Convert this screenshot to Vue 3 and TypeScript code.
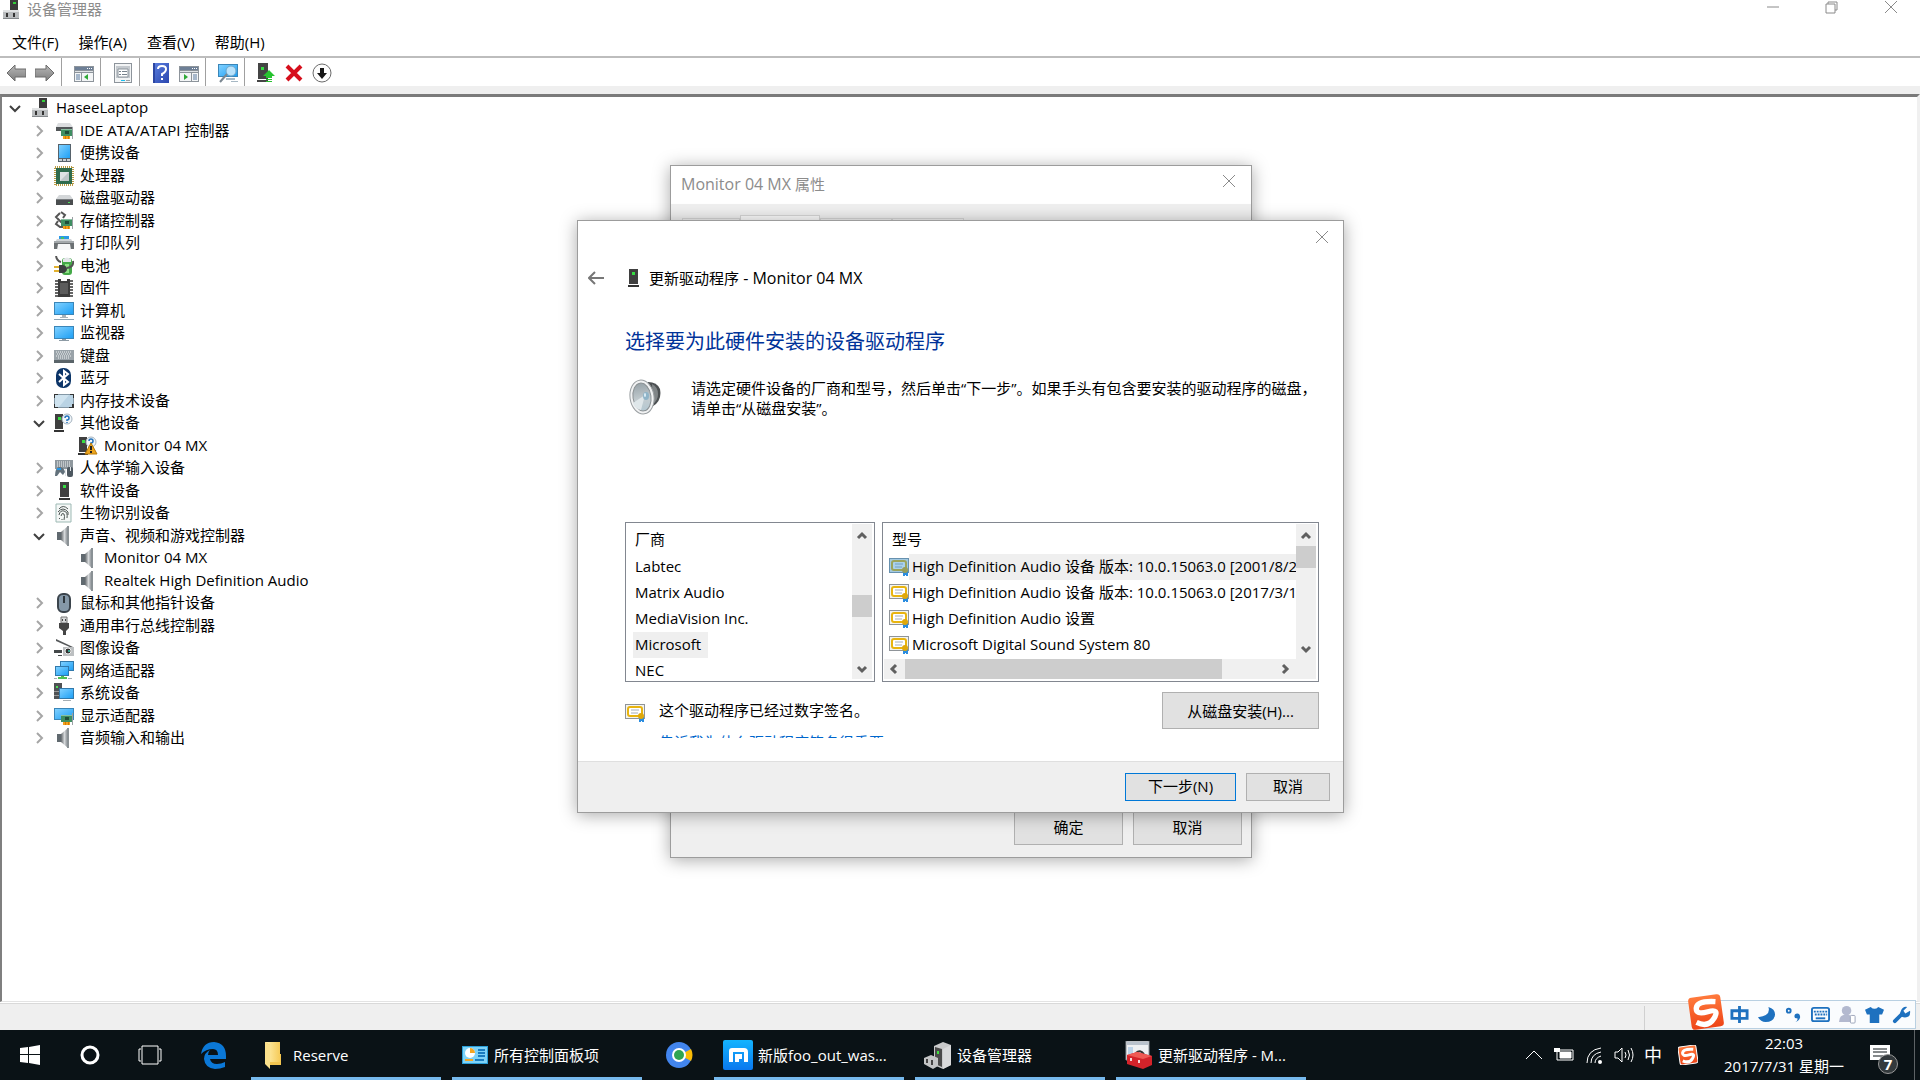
<script setup lang="ts">
import { h, type FunctionalComponent } from 'vue'

interface TreeRow { level: number; icon: string; label: string; state?: 'open' | 'closed' }

const rows: TreeRow[] = [
  { level: 0, icon: 'root', label: 'HaseeLaptop', state: 'open' },
  { level: 1, icon: 'ide', label: 'IDE ATA/ATAPI 控制器', state: 'closed' },
  { level: 1, icon: 'portable', label: '便携设备', state: 'closed' },
  { level: 1, icon: 'cpu', label: '处理器', state: 'closed' },
  { level: 1, icon: 'disk', label: '磁盘驱动器', state: 'closed' },
  { level: 1, icon: 'storage', label: '存储控制器', state: 'closed' },
  { level: 1, icon: 'printer', label: '打印队列', state: 'closed' },
  { level: 1, icon: 'battery', label: '电池', state: 'closed' },
  { level: 1, icon: 'firmware', label: '固件', state: 'closed' },
  { level: 1, icon: 'computer', label: '计算机', state: 'closed' },
  { level: 1, icon: 'monitor', label: '监视器', state: 'closed' },
  { level: 1, icon: 'keyboard', label: '键盘', state: 'closed' },
  { level: 1, icon: 'bluetooth', label: '蓝牙', state: 'closed' },
  { level: 1, icon: 'memory', label: '内存技术设备', state: 'closed' },
  { level: 1, icon: 'other', label: '其他设备', state: 'open' },
  { level: 2, icon: 'warn', label: 'Monitor 04 MX' },
  { level: 1, icon: 'hid', label: '人体学输入设备', state: 'closed' },
  { level: 1, icon: 'tower', label: '软件设备', state: 'closed' },
  { level: 1, icon: 'finger', label: '生物识别设备', state: 'closed' },
  { level: 1, icon: 'sound', label: '声音、视频和游戏控制器', state: 'open' },
  { level: 2, icon: 'sound', label: 'Monitor 04 MX' },
  { level: 2, icon: 'sound', label: 'Realtek High Definition Audio' },
  { level: 1, icon: 'mouse', label: '鼠标和其他指针设备', state: 'closed' },
  { level: 1, icon: 'usb', label: '通用串行总线控制器', state: 'closed' },
  { level: 1, icon: 'camera', label: '图像设备', state: 'closed' },
  { level: 1, icon: 'network', label: '网络适配器', state: 'closed' },
  { level: 1, icon: 'system', label: '系统设备', state: 'closed' },
  { level: 1, icon: 'display', label: '显示适配器', state: 'closed' },
  { level: 1, icon: 'sound', label: '音频输入和输出', state: 'closed' },
]

const menus = ['文件(F)', '操作(A)', '查看(V)', '帮助(H)']
const tools: { name: string; label: string }[][] = [
  [{ name: 'prev', label: '后退' }, { name: 'next', label: '前进' }],
  [{ name: 'panel-left', label: '显示/隐藏控制台树' }],
  [{ name: 'props', label: '属性' }],
  [{ name: 'help', label: '帮助' }, { name: 'panel-right', label: '显示/隐藏操作窗格' }],
  [{ name: 'scan', label: '扫描检测硬件改动' }],
  [{ name: 'update', label: '更新驱动程序' }, { name: 'remove', label: '卸载设备' }, { name: 'disable', label: '禁用设备' }],
]
const makers = ['Labtec', 'Matrix Audio', 'MediaVision Inc.', 'Microsoft', 'NEC']
const models = [
  'High Definition Audio 设备 版本: 10.0.15063.0 [2001/8/22]',
  'High Definition Audio 设备 版本: 10.0.15063.0 [2017/3/18]',
  'High Definition Audio 设置',
  'Microsoft Digital Sound System 80',
]
const imeTools = ['zhong', 'moon', 'punct', 'softkeys', 'person', 'shirt', 'wrench']

const Icon: FunctionalComponent<{ name: string }> = (p) =>
  h('svg', { class: 'ico', viewBox: '0 0 20 20', 'aria-hidden': 'true' }, [h('use', { href: '#i-' + p.name })])
Icon.props = ['name']
</script>

<template>
  <div class="screen">
    <svg class="defs" width="0" height="0" aria-hidden="true">
      <defs>
        <linearGradient id="g-blue" x1="0" y1="0" x2="1" y2="1"><stop offset="0" stop-color="#7fd0ff" /><stop offset="1" stop-color="#1fa0f5" /></linearGradient>
        <linearGradient id="g-grey" x1="0" y1="0" x2="1" y2="0"><stop offset="0" stop-color="#62676b" /><stop offset="0.5" stop-color="#d5d8da" /><stop offset="1" stop-color="#7b8186" /></linearGradient>
        <linearGradient id="g-arrow" x1="0" y1="0" x2="0" y2="1"><stop offset="0" stop-color="#b8b8b8" /><stop offset="1" stop-color="#7d7d7d" /></linearGradient>
        <linearGradient id="g-help" x1="0" y1="0" x2="1" y2="1"><stop offset="0" stop-color="#5b7fe0" /><stop offset="1" stop-color="#2a46ae" /></linearGradient>
        <linearGradient id="g-fold" x1="0" y1="0" x2="1" y2="0"><stop offset="0" stop-color="#fff0b0" /><stop offset="1" stop-color="#f6cb59" /></linearGradient>
        <linearGradient id="g-max" x1="0" y1="0" x2="0" y2="1"><stop offset="0" stop-color="#14b4ff" /><stop offset="1" stop-color="#0a78ee" /></linearGradient>
        <linearGradient id="g-cone" x1="0" y1="0" x2="0" y2="1"><stop offset="0" stop-color="#98a3a9" /><stop offset="0.600" stop-color="#c3ccd0" /><stop offset="1" stop-color="#b4c8d2" /></linearGradient>
        <linearGradient id="g-sogou" x1="0" y1="0" x2="0" y2="1"><stop offset="0" stop-color="#ff7a3c" /><stop offset="1" stop-color="#ee4518" /></linearGradient>
      </defs>
      <symbol id="i-root" viewBox="0 0 20 20"><path d="M9 0h8v11H9z" fill="#3b3b3b" /><path d="M12 2h3v2h-3z" fill="#33cf3a" /><path d="M2 10h16v9H2z" fill="#b9bcbe" /><path d="M2 10h16v2H2z" fill="#e0e2e3" /><path d="M2 18h16v1H2z" fill="#84888b" /><path d="M5 13h2v4H5zM12 13h2v4h-2z" fill="#333" /></symbol>
      <symbol id="i-card" viewBox="0 0 20 20"><path d="M7 8h11v7H7z" fill="#3f8f62" /><path d="M7 8h11v1H7z" fill="#88bfa0" /><path d="M11 10h4v3h-4z" fill="#1f4d38" /><path d="M18 6h1v12h-1z" fill="#9aa0a4" /><path d="M9 15h7v3H9z" fill="#f4a11c" /><path d="M11 15h1v3h-1zM14 15h1v3h-1z" fill="#d67b00" /></symbol>
      <symbol id="i-ide" viewBox="0 0 20 20"><path d="M4 2h12l3 4H2z" fill="#dcdee0" /><path d="M2 6h17v4H2z" fill="#525658" /><use href="#i-card" /></symbol>
      <symbol id="i-portable" viewBox="0 0 20 20"><path d="M4 1h13v18H4z" fill="#56626b" /><path d="M5 2h11v13H5z" fill="url(#g-blue)" /><path d="M5 16h11v2H5z" fill="#c8cfd3" /><path d="M8 16h1v2H8zM12 16h1v2h-1z" fill="#56626b" /></symbol>
      <symbol id="i-cpu" viewBox="0 0 20 20"><rect x="1" y="1" width="18" height="18" fill="none" stroke="#b99b44" stroke-width="2" stroke-dasharray="1 1" /><path d="M2 2h16v16H2z" fill="#2f6b4d" /><path d="M6 6h9v9H6z" fill="#dfe2e3" /><path d="M15 6v9H6z" fill="#bfc6c8" /></symbol>
      <symbol id="i-disk" viewBox="0 0 20 20"><path d="M5 7h11l3 4H2z" fill="#d4d7d9" /><path d="M2 11h17v6H2z" fill="#4a4d4f" /><path d="M2 11h17v1H2z" fill="#777b7e" /><path d="M14 14h2v1h-2z" fill="#4fe05a" /></symbol>
      <symbol id="i-storage" viewBox="0 0 20 20"><path d="M7 1l4 3-2 3M6 2L2 6l5 5h5M4 10l-2 3 4 3h4" fill="none" stroke="#555" stroke-width="2" /><use href="#i-card" /></symbol>
      <symbol id="i-printer" viewBox="0 0 20 20"><path d="M5 3h10v5H5z" fill="#2b9ae8" /><path d="M7 4h3v3H7z" fill="#42c36a" /><path d="M3 6h14l2 3H1z" fill="#cfd3d6" /><path d="M0 8h20v8H0z" fill="#6b7073" /><path d="M0 8h20v2H0z" fill="#a3a8ab" /><path d="M4 11h12l1 6H3z" fill="#f6f7f8" /></symbol>
      <symbol id="i-battery" viewBox="0 0 20 20"><rect x="8" y="2" width="10" height="17" rx="3" fill="#44a948" /><path d="M9 3q4-3 8 0v3H9z" fill="#e4e6ea" /><path d="M11 8h4v9h-4z" fill="#8ce084" /><path d="M0 10h5v2H0zM0 14h5v2H0z" fill="#e2b12f" /><path d="M5 9h4q4 1 4 4t-4 4H5z" fill="#3c3f40" /><path d="M13 12q7-1 6-7M2 0q1 5 5 6" fill="none" stroke="#555" stroke-width="2" /></symbol>
      <symbol id="i-firmware" viewBox="0 0 20 20"><path d="M3 2v17M17 2v17" stroke="#666" stroke-width="4" stroke-dasharray="2 1" /><path d="M4 1h3v2h6V1h3v18H4z" fill="#3c3c3c" /><path d="M6 5h8v11H6z" fill="#5c5c5c" /></symbol>
      <symbol id="i-computer" viewBox="0 0 20 20"><path d="M0 1h20v13H0z" fill="#3b86b8" /><path d="M1 2h18v11H1z" fill="url(#g-blue)" /><path d="M8 14h4v2h2v1H6v-1h2z" fill="#a9b3ba" /><path d="M0 18h20v1H0z" fill="#8fa5b4" /></symbol>
      <symbol id="i-monitor" viewBox="0 0 20 20"><path d="M0 3h20v13H0z" fill="#3b86b8" /><path d="M1 4h18v11H1z" fill="url(#g-blue)" /><path d="M8 16h4v1h3v1H5v-1h3z" fill="#8d9ba5" /></symbol>
      <symbol id="i-keyboard" viewBox="0 0 20 20"><path d="M0 4h20v10H0z" fill="#9aa3a9" /><path d="M0 14h20v3H0z" fill="#5a6469" /><path d="M2 6h16M3 8h14M2 10h16M4 12h12" stroke="#f1f4f5" stroke-dasharray="1 1" /></symbol>
      <symbol id="i-bluetooth" viewBox="0 0 20 20"><rect x="2" y="0" width="15" height="20" rx="7" fill="#0c3568" /><path d="M5 6l9 8-4 3V3l4 3-9 8" fill="none" stroke="#fff" stroke-width="2" /></symbol>
      <symbol id="i-memory" viewBox="0 0 20 20"><rect x="0" y="3" width="20" height="14" rx="1" fill="#8397a5" /><path d="M1 4h18v12H1z" fill="#b9d3e4" /><path d="M1 4h14L5 16H1z" fill="#cfe3ef" /><path d="M0 3h4v1H1v3H0zM20 3h-4v1h3v3h1zM0 17h4v-1H1v-3H0zM20 17h-5v-1h3v-3h2z" fill="#333" /></symbol>
      <symbol id="i-pc" viewBox="0 0 20 20"><path d="M1 1h8v15H1z" fill="#3f3f3f" /><path d="M4 4h3v3H4z" fill="#36dd42" /><path d="M0 17h10v2H0z" fill="#333" /></symbol>
      <symbol id="i-other" viewBox="0 0 20 20"><use href="#i-pc" /><circle cx="13" cy="6" r="5" fill="#f1f6fa" stroke="#a6b4bf" /><path d="M11 5q0-2 2-2t2 2-2 2v1M13 9v1" fill="none" stroke="#2472bb" stroke-width="1.500" /></symbol>
      <symbol id="i-warn" viewBox="0 0 20 20"><use href="#i-other" /><path d="M13 7l6 11H7z" fill="#eea51d" stroke="#b97a08" /><path d="M13 10v4M13 15v2" stroke="#222" stroke-width="2" /></symbol>
      <symbol id="i-hid" viewBox="0 0 20 20"><path d="M1 2h18v9H1z" fill="#8f989e" /><path d="M3 4h14M3 6h14M3 8h14" stroke="#f1f4f5" stroke-dasharray="1 1" /><path d="M1 18q0-8 4-9 5 0 6 5l-2 3-3-3-3 4z" fill="#62717b" /><path d="M3 10h4v2H3z" fill="#2794e2" /><rect x="13" y="9" width="6" height="10" rx="2" fill="#4d5860" /><path d="M11 11h1v7h-1zM16 9h1v4h-1z" fill="#dfe4e8" /></symbol>
      <symbol id="i-tower" viewBox="0 0 20 20"><path d="M6 1h9v15H6z" fill="#3f3f3f" /><path d="M9 4h3v3H9z" fill="#36dd42" /><path d="M5 17h11v2H5z" fill="#333" /></symbol>
      <symbol id="i-finger" viewBox="0 0 20 20"><path d="M2 1h15v18H2z" fill="#f4f7f6" stroke="#9db9b4" /><path d="M5 6q4-5 9 0M4 9q5-6 10 0v3M5 12q1-5 5-4 4 1 3 7M7 13q1-4 3-2 1 2 0 6M8 16v1M5 15l1 1" fill="none" stroke="#4c5452" /></symbol>
      <symbol id="i-sound" viewBox="0 0 20 20"><path d="M3 6h4v8H3z" fill="#60696f" /><path d="M7 6l7-6v20l-7-6z" fill="url(#g-grey)" /><path d="M13 0h2v20h-2z" fill="#8a9195" /></symbol>
      <symbol id="i-mouse" viewBox="0 0 20 20"><rect x="4" y="1" width="12" height="18" rx="5" fill="#8598a8" stroke="#3b444c" stroke-width="2" /><path d="M9 3h2v7H9z" fill="#2e363c" /></symbol>
      <symbol id="i-usb" viewBox="0 0 20 20"><path d="M7 1h6v6H7z" fill="#d8dadb" stroke="#777" /><path d="M8 3h1v2H8zM11 3h1v2h-1z" fill="#444" /><path d="M5 7h10v5l-3 3v4H9v-4l-4-3z" fill="#454545" /></symbol>
      <symbol id="i-camera" viewBox="0 0 20 20"><path d="M2 1l17 8-1 1L2 3z" fill="#55585a" /><path d="M9 9h11v9H9z" fill="#bcbfc1" /><path d="M0 12h8v3H0zM8 17h-4v1h4z" fill="#44484a" /><circle cx="14" cy="13" r="3" fill="#333" stroke="#eee" /><circle cx="15" cy="13" r="1" fill="#3dc9b0" /></symbol>
      <symbol id="i-network" viewBox="0 0 20 20"><path d="M6 0h14v10H6z" fill="#3179ab" /><path d="M7 1h12v8H7z" fill="url(#g-blue)" /><path d="M1 5h14v10H1z" fill="#3179ab" /><path d="M2 6h12v8H2z" fill="url(#g-blue)" /><path d="M7 15h3v1h3v2H4v-2h3z" fill="#4fbf55" /><path d="M0 17h3v1H0zM14 17h4v1h-4z" fill="#a5aeb4" /></symbol>
      <symbol id="i-system" viewBox="0 0 20 20"><path d="M0 0h8v16H0z" fill="#4f5254" /><path d="M2 3h2v2H2z" fill="#4fe05a" /><path d="M0 8h5v1H0zM0 12h5v1H0z" fill="#999" /><path d="M5 5h15v11H5z" fill="#3179ab" /><path d="M6 6h13v9H6z" fill="url(#g-blue)" /><path d="M9 17h8v1H9z" fill="#a5aeb4" /></symbol>
      <symbol id="i-display" viewBox="0 0 20 20"><path d="M0 2h20v12H0z" fill="#3b86b8" /><path d="M1 3h18v10H1z" fill="url(#g-blue)" /><use href="#i-card" y="1" /></symbol>

      <symbol id="i-prev" viewBox="0 0 20 20"><path d="M9 2L1 10l8 8v-4h11V6H9z" fill="url(#g-arrow)" stroke="#6c6c6c" /></symbol>
      <symbol id="i-next" viewBox="0 0 20 20"><path d="M11 2l8 8-8 8v-4H0V6h11z" fill="url(#g-arrow)" stroke="#6c6c6c" /></symbol>
      <symbol id="i-panel" viewBox="0 0 20 20"><path d="M0 3h20v16H0z" fill="#8d949b" /><path d="M1 4h18v3H1z" fill="#6d7f96" /><path d="M13 5h1v1h-1zM15 5h1v1h-1zM17 5h1v1h-1z" fill="#fff" /><path d="M1 8h18v1H1z" fill="#dfe3e6" /></symbol>
      <symbol id="i-panel-left" viewBox="0 0 20 20"><use href="#i-panel" /><path d="M1 10h6v8H1zM8 10h11v8H8z" fill="#f3f5f6" /><path d="M2 12h4M2 14h4M2 16h4" stroke="#5b7ba0" /><path d="M14 11v6l-4-3z" fill="#2fa836" /></symbol>
      <symbol id="i-panel-right" viewBox="0 0 20 20"><use href="#i-panel" /><path d="M1 10h11v8H1zM13 10h6v8h-6z" fill="#f3f5f6" /><path d="M14 12h4M14 14h4M14 16h4" stroke="#5b7ba0" /><path d="M5 11v6l4-3z" fill="#2fa836" /></symbol>
      <symbol id="i-props" viewBox="0 0 20 20"><path d="M1 0h18v20H1z" fill="#8d949b" /><path d="M2 1h16v18H2z" fill="#f2f4f5" /><path d="M3 3h14v12H3z" fill="#c4c9ce" /><path d="M5 6h10v8H5z" fill="#fff" stroke="#8c959d" /><path d="M6 8h2v1H6zM6 11h2v1H6zM9 8h5v1H9zM9 11h5v1H9z" fill="#77828c" /><path d="M8 17h4v1H8z" fill="#18bff0" /><path d="M13 17h4v1h-4z" fill="#9ba1a6" /></symbol>
      <symbol id="i-help" viewBox="0 0 20 20"><path d="M2 0h16v20H2z" fill="url(#g-help)" /><path d="M2 0h2v20H2z" fill="#2c46a2" /><path d="M7 6q0-3 4-3t4 3-4 5v2M11 15v2" fill="none" stroke="#fff" stroke-width="2" /></symbol>
      <symbol id="i-scan" viewBox="0 0 20 20"><path d="M0 1h20v13H0z" fill="#3b86b8" /><path d="M1 2h18v11H1z" fill="url(#g-blue)" /><path d="M8 15h9v2H8zM13 18h7v1h-7z" fill="#a7b8c4" /><circle cx="13" cy="8" r="5" fill="#b9e2fb" stroke="#6ea6c9" /><path d="M9 11l-7 8" stroke="#7b8791" stroke-width="2" /></symbol>
      <symbol id="i-update" viewBox="0 0 20 20"><path d="M2 0h10v16H2z" fill="#444" /><path d="M5 4h3v3H5z" fill="#36dd42" /><path d="M1 17h11v2H1z" fill="#444" /><path d="M13 7l6 6h-3v2h-6v-2H7zM10 16h6v1h-6zM10 18h6v1h-6z" fill="#27c32f" /></symbol>
      <symbol id="i-remove" viewBox="0 0 20 20"><path d="M3 3l14 14M17 3L3 17" stroke="#d60f1c" stroke-width="4" /></symbol>
      <symbol id="i-disable" viewBox="0 0 20 20"><circle cx="10" cy="10" r="9" fill="#fdfdfd" stroke="#6b6b6b" /><path d="M8 5h4v5h3l-5 6-5-6h3z" fill="#151515" /></symbol>
      <symbol id="i-cert" viewBox="0 0 20 20"><path d="M0 1h20v15H0z" fill="#8f9499" /><path d="M1 2h18v13H1z" fill="#f3f3ee" /><rect x="3" y="4" width="14" height="9" rx="2" fill="#fff" stroke="#e8b410" stroke-width="2" /><path d="M6 7h8M6 10h7" stroke="#a4aeb9" /><path d="M14 14h5v5h-2v-1h-1v1h-2z" fill="#2a8ce0" /><circle cx="16" cy="13" r="3" fill="#e0a80a" /></symbol>
      <symbol id="i-cert-sel" viewBox="0 0 20 20"><use href="#i-cert" /><path d="M0 1h20v15H0z" fill="#2a8cd0" opacity="0.400" /></symbol>

      <symbol id="i-zhong" viewBox="0 0 20 20"><path d="M2 6h16v8H2zM10 1v18" fill="none" stroke="#1e71bf" stroke-width="3" /></symbol>
      <symbol id="i-moon" viewBox="0 0 20 20"><path d="M12 2q3 9-11 11 3 5 8 5 9 0 10-8 0-6-7-8z" fill="#1e71bf" /></symbol>
      <symbol id="i-punct" viewBox="0 0 20 20"><circle cx="5" cy="6" r="2" fill="none" stroke="#1e71bf" stroke-width="2" /><path d="M11 12q0-3 3-3t3 4q-1 4-5 5 3-2 2-4-3 0-3-2z" fill="#1e71bf" /></symbol>
      <symbol id="i-softkeys" viewBox="0 0 20 20"><rect x="1" y="3" width="18" height="14" rx="2" fill="none" stroke="#1e71bf" stroke-width="2" /><path d="M3 7h14M4 10h13" stroke="#1e71bf" stroke-width="2" stroke-dasharray="2 1" /><path d="M5 14h10" stroke="#1e71bf" stroke-width="2" /></symbol>
      <symbol id="i-person" viewBox="0 0 20 20"><circle cx="9" cy="6" r="5" fill="#b3b9cf" /><path d="M1 18q0-8 8-8 7 0 7 8z" fill="#b3b9cf" /><rect x="13" y="11" width="5" height="8" rx="1" fill="#fff" stroke="#9ba3b8" /></symbol>
      <symbol id="i-shirt" viewBox="0 0 20 20"><path d="M6 2q4 4 8 0l6 3-2 5h-3v9H5v-9H2L0 5z" fill="#1e71bf" /></symbol>
      <symbol id="i-wrench" viewBox="0 0 20 20"><path d="M3 17l8-8" stroke="#1e71bf" stroke-width="4" stroke-linecap="round" /><path d="M16 2l-4 4 2 3 5-3q1 8-7 7-5-1-3-6 2-6 7-5z" fill="#1e71bf" /></symbol>
      <symbol id="i-sogou" viewBox="0 0 20 20"><g transform="rotate(-8 10 10)"><rect x="1" y="1" width="18" height="18" rx="2" fill="url(#g-sogou)" /><path d="M16 5Q6 3 5 7t6 3 3 4-10 1" fill="none" stroke="#fff" stroke-width="3" /></g></symbol>
    </svg>

    <header class="titlebar">
      <Icon name="root" />
      <h1 class="title">设备管理器</h1>
      <div class="winbtns">
        <button type="button" aria-label="最小化"><svg viewBox="0 0 14 14"><path d="M1 7h12" /></svg></button>
        <button type="button" aria-label="还原"><svg viewBox="0 0 14 14"><path d="M1 4h9v9H1zM3 4V2h9v8h-2" /></svg></button>
        <button type="button" aria-label="关闭"><svg viewBox="0 0 14 14"><path d="M1 1l12 12M13 1L1 13" /></svg></button>
      </div>
    </header>
    <nav class="menubar">
      <button v-for="m in menus" :key="m" type="button">{{ m }}</button>
    </nav>
    <div class="toolbar">
      <div v-for="(group, i) in tools" :key="i" class="group">
        <button v-for="t in group" :key="t.name" type="button" :aria-label="t.label"><Icon :name="t.name" /></button>
      </div>
    </div>

    <main class="pane">
      <ul class="tree">
        <li v-for="(r, i) in rows" :key="i" :class="'lv' + r.level">
          <span class="chev">
            <svg v-if="r.state === 'open'" viewBox="0 0 12 12"><path d="M1 4l5 5 5-5" stroke="#404040" /></svg>
            <svg v-else-if="r.state === 'closed'" viewBox="0 0 12 12"><path d="M4 1l5 5-5 5" stroke="#a6a6a6" /></svg>
          </span>
          <Icon :name="r.icon" />
          <span class="label">{{ r.label }}</span>
        </li>
      </ul>
    </main>
    <div class="statusbar"><i></i></div>

    <section class="dialog props" aria-label="Monitor 04 MX 属性">
      <header class="dlg-title"><h2><span class="wide-latin">Monitor 04 MX</span> 属性</h2>
        <button type="button" class="x" aria-label="关闭"><svg viewBox="0 0 14 14"><path d="M1 1l12 12M13 1L1 13" /></svg></button>
      </header>
      <div class="tabs"><span></span><span class="on"></span><span></span><span></span></div>
      <footer><button type="button" class="btn">确定</button><button type="button" class="btn">取消</button></footer>
    </section>

    <section class="dialog wizard" aria-label="更新驱动程序">
      <header class="wiz-top">
        <button type="button" class="x" aria-label="关闭"><svg viewBox="0 0 14 14"><path d="M1 1l12 12M13 1L1 13" /></svg></button>
      </header>
      <div class="wiz-head">
        <button type="button" class="back" aria-label="后退"><svg viewBox="0 0 16 14"><path d="M1 7h15M7 1L1 7l6 6" /></svg></button>
        <Icon name="tower" />
        <h2>更新驱动程序<span class="wide-latin"> - Monitor 04 MX</span></h2>
      </div>
      <div class="wiz-body">
        <h3>选择要为此硬件安装的设备驱动程序</h3>
        <div class="intro">
          <svg class="speaker" viewBox="0 0 34 38" aria-hidden="true">
            <path d="M20 4q9 0 12 7 2 9-4 15-4 4-9 3z" fill="#4c5052" />
            <path d="M24 6q6 3 6 10 0 6-5 10z" fill="#808587" />
            <ellipse cx="14" cy="19" rx="12" ry="17" fill="#f1f2f3" stroke="#9a9fa2" transform="rotate(-8 14 19)" />
            <ellipse cx="14" cy="19" rx="9" ry="14" fill="url(#g-cone)" stroke="#8b9194" transform="rotate(-8 14 19)" />
            <path d="M17 17L5 25q2 6 8 7z" fill="#dfe7ea" />
            <ellipse cx="18" cy="18" rx="3" ry="4" fill="#8fb4c8" />
            <ellipse cx="17" cy="17" rx="1" ry="2" fill="#dff0f8" />
          </svg>
          <p>请选定硬件设备的厂商和型号，然后单击<q>下一步</q>。如果手头有包含要安装的驱动程序的磁盘，<br>请单击<q>从磁盘安装</q>。</p>
        </div>
        <div class="lists">
          <div class="box makers">
            <div class="view">
              <div class="colhead">厂商</div>
              <ul role="listbox" aria-label="厂商">
                <li v-for="m in makers" :key="m" role="option" :aria-selected="m === 'Microsoft'"><span class="label">{{ m }}</span></li>
              </ul>
            </div>
            <div class="vbar"><svg viewBox="0 0 12 12"><path d="M2 8l4-4 4 4" /></svg><b></b><svg viewBox="0 0 12 12"><path d="M2 4l4 4 4-4" /></svg></div>
          </div>
          <div class="box models">
            <div class="upper">
              <div class="view">
                <div class="colhead">型号</div>
                <ul role="listbox" aria-label="型号">
                  <li v-for="(m, i) in models" :key="m" role="option" :aria-selected="i === 0"><Icon :name="i === 0 ? 'cert-sel' : 'cert'" /><span class="label">{{ m }}</span></li>
                </ul>
              </div>
              <div class="vbar"><svg viewBox="0 0 12 12"><path d="M2 8l4-4 4 4" /></svg><b></b><svg viewBox="0 0 12 12"><path d="M2 4l4 4 4-4" /></svg></div>
            </div>
            <div class="hbar"><svg viewBox="0 0 12 12"><path d="M8 2L4 6l4 4" /></svg><b></b><svg viewBox="0 0 12 12"><path d="M4 2l4 4-4 4" /></svg></div>
          </div>
        </div>
        <div class="signed">
          <Icon name="cert" />
          <div class="signtext">
            <p>这个驱动程序已经过数字签名。</p>
            <a href="#">告诉我为什么驱动程序签名很重要</a>
          </div>
          <button type="button" class="btn">从磁盘安装(H)...</button>
        </div>
      </div>
      <footer><button type="button" class="btn primary">下一步(N)</button><button type="button" class="btn">取消</button></footer>
    </section>

    <div class="ime">
      <Icon name="sogou" class="imelogo" />
      <button v-for="t in imeTools" :key="t" type="button" :aria-label="t"><Icon :name="t" /></button>
    </div>

    <footer class="taskbar">
      <button type="button" class="sys" aria-label="开始"><svg viewBox="0 0 20 20"><path d="M0 3l8-1v7H0zM9 2l11-2v9H9zM0 10h8v8l-8-1zM9 10h11v10L9 18z" fill="#fff" /></svg></button>
      <button type="button" class="sys" aria-label="Cortana"><svg viewBox="0 0 20 20"><circle cx="10" cy="10" r="8" fill="none" stroke="#fff" stroke-width="3" /></svg></button>
      <button type="button" class="sys" aria-label="任务视图"><svg class="w24" viewBox="0 0 24 20"><path d="M4 1h16v18H4zM3 4H1v12h2M21 4h2v12h-2" fill="none" stroke="#fff" /></svg></button>
      <button type="button" class="sys edge" aria-label="Edge"><svg class="w28" viewBox="0 0 28 28"><path d="M1 13Q3 1 14 1q12 1 12 14v3H10q1 5 7 5 4 0 8-2v5q-5 2-10 2Q5 27 4 18q0-6 6-9-2 2-2 5h10q0-6-5-6-7 0-12 5z" fill="#0b78d7" /></svg></button>
      <button type="button" class="task">
        <svg class="w28" viewBox="0 0 28 28"><path d="M5 1h15v12h1v11H10z" fill="#f2c550" /><path d="M5 1h15v20H10V4z" fill="url(#g-fold)" /><path d="M5 1l5 3v24l-5-5z" fill="#fbe08b" /></svg>
        <span>Reserve</span></button>
      <button type="button" class="task">
        <svg class="w28" viewBox="0 0 28 28"><path d="M1 5h26v18H1z" fill="#2a9fd8" /><path d="M2 6h24v16H2z" fill="#7ed2f7" /><circle cx="9" cy="12" r="5" fill="#fff" /><path d="M9 12V7a5 5 0 0 1 5 5z" fill="#f5a623" /><path d="M17 9h7M17 12h7M17 15h7" stroke="#1b7cc0" stroke-width="2" /><path d="M4 19h8" stroke="#f5a623" stroke-width="2" /><path d="M14 19h9" stroke="#1b7cc0" stroke-width="2" /></svg>
        <span>所有控制面板项</span></button>
      <button type="button" class="sys chrome" aria-label="浏览器"><svg class="w28" viewBox="0 0 28 28"><circle cx="14" cy="14" r="13" fill="#4285ee" /><path d="M15 14l11-6q3 6 0 12z" fill="#fbbc05" /><circle cx="14" cy="14" r="7" fill="#fff" /><circle cx="14" cy="14" r="5" fill="#2fa552" /></svg></button>
      <button type="button" class="task">
        <svg class="w30" viewBox="0 0 30 30"><rect width="30" height="30" rx="2" fill="url(#g-max)" /><path d="M8 22V11q0-1 1-1h12q2 0 2 2v10M14 22v-6h3v3" fill="none" stroke="#fff" stroke-width="4" /></svg>
        <span>新版foo_out_was...</span></button>
      <button type="button" class="task">
        <svg class="w28" viewBox="0 0 28 28"><path d="M10 5l9-4 8 3v20l-8 4-9-4z" fill="#c9cacb" /><path d="M11 6l7 2v18l-7-3z" fill="#4a4a4a" /><path d="M19 8l8-4v20l-8 4z" fill="#d9dadb" /><path d="M13 10h2v3h-2z" fill="#3fe03f" /><path d="M0 17l7-3 7 3v8l-5 3-9-5z" fill="#c3c5c6" /><path d="M3 18v4M8 19v5" stroke="#444" stroke-width="2" /></svg>
        <span>设备管理器</span></button>
      <button type="button" class="task">
        <svg class="w28" viewBox="0 0 28 28"><path d="M1 0h23v19H1z" fill="#eef0f2" stroke="#8b9299" /><path d="M2 1h21v3H2z" fill="#b9c2cc" /><path d="M3 6h5v7H3z" fill="#bcd3e8" /><path d="M11 12q4-4 8 1" fill="none" stroke="#333" stroke-width="2" /><path d="M2 14l10-3 15 4v9l-9 4-16-5z" fill="#d4232a" /><path d="M2 14l10-3 15 4-9 3z" fill="#ef5a54" /><path d="M6 17v3M14 19v3" stroke="#f6d9d9" stroke-width="2" /></svg>
        <span>更新驱动程序 - M...</span></button>

      <div class="tray">
        <svg viewBox="0 0 20 20"><path d="M2 14l8-8 8 8" /></svg>
        <svg viewBox="0 0 20 20"><path d="M3 5h16v10H3z" /><path d="M6 7h11v6H6z" fill="#fff" /><path d="M0 3h6v4H0z" fill="#fff" stroke="none" /></svg>
        <svg viewBox="0 0 20 20"><path d="M3 18Q3 5 17 3M7 18q0-9 10-11M11 18q0-5 6-7" /><circle cx="16" cy="17" r="2" fill="#fff" stroke="none" /></svg>
        <svg viewBox="0 0 20 20"><path d="M1 7h3l4-4v14l-4-4H1z" /><path d="M11 7q2 3 0 6M14 5q3 5 0 10M17 3q4 7 0 14" /></svg>
        <span class="zh">中</span>
        <Icon name="sogou" />
      </div>
      <div class="clock"><time>22:03</time><span>2017/7/31 星期一</span></div>
      <button type="button" class="notify" aria-label="通知">
        <svg viewBox="0 0 20 20"><path d="M0 0h20v15h-6l-4 4v-4H0z" fill="#fff" /><path d="M3 4h14M3 7h14M3 11h10" stroke="#0a1317" /></svg>
        <span class="count">7</span></button>
      <i class="peek"></i>
    </footer>
  </div>
</template>

<style>
body { margin: 0; background: #fff; }
</style>

<style scoped>
* { box-sizing: border-box; }
.screen { position: relative; display: flex; flex-direction: column; min-height: 100vh; overflow: hidden; background: #fff; color: #000; font: 15px/20px "Open Sans", "Noto Sans CJK SC", sans-serif; }
.defs { position: absolute; }
button { margin: 0; padding: 0; border: 0; background: none; font: inherit; color: inherit; }
h1, h2, h3, p, ul { margin: 0; padding: 0; font-weight: 400; font-size: 15px; }
ul { list-style: none; }
svg { display: block; flex: none; }
.ico { width: 20px; height: 20px; }
.label { padding-bottom: 2px; white-space: pre; }
.wide-latin { font-size: 16px; white-space: pre; }

.titlebar { display: flex; height: 28px; padding-left: 1px; }
.title { margin-left: 6px; line-height: 18px; color: #8c8c8c; }
.winbtns { display: flex; margin-left: auto; }
.winbtns button { width: 59px; height: 14px; display: flex; justify-content: center; }
.winbtns svg, .x svg { width: 14px; height: 14px; fill: none; stroke: #8a8a8a; }
.menubar { display: flex; gap: 20px; height: 30px; padding-left: 12px; align-items: center; border-bottom: 2px solid #bdbdbd; }
.toolbar { display: flex; height: 36px; padding-left: 1px; border-bottom: 8px solid #efefef; }
.group { display: flex; align-items: center; }
.group + .group { padding-left: 7px; margin-left: 2px; border-left: 1px solid #a0a0a0; }
.group button { width: 29px; padding-top: 2px; display: flex; justify-content: center; }
.group + .group button { width: 28px; }
.group + .group button:only-child { width: 29px; }

.pane { flex: 1; border: solid; border-width: 3px 3px 1px 2px; border-color: #7a7a7a #f0f0f0 #e3e3e3 #7f7f7f; }
.tree li { display: flex; align-items: center; height: 22px; padding-left: 2px; }
.tree li:nth-child(even) { height: 23px; }
.tree .lv1 { padding-left: 26px; }
.tree .lv2 { padding-left: 50px; }
.tree .ico { margin-right: 6px; }
.chev { width: 21px; margin-right: 5px; display: flex; justify-content: center; }
.chev svg { width: 12px; height: 12px; fill: none; stroke-width: 2; }
.statusbar { height: 27px; background: #efefef; border-top: 1px solid #d9d9d9; display: flex; justify-content: flex-end; margin-top: 1px; }
.statusbar i { width: 276px; border-left: 1px solid #d0d0d0; margin-top: 2px; }

.dialog { position: absolute; left: 50%; display: flex; flex-direction: column; border: 1px solid #9c9c9c; background: #fff; box-shadow: 0 2px 16px rgba(0, 0, 0, 0.34); }
.dialog footer { display: flex; justify-content: flex-end; background: #efefef; }
.btn { background: #e1e1e1; border: 1px solid #b0b0b0; height: 28px; text-align: center; }
.x { display: flex; padding: 0; }
.props { top: 165px; width: 582px; height: 693px; margin-left: -290px; background: #efefef; }
.dlg-title { display: flex; justify-content: space-between; align-items: flex-start; height: 38px; padding: 8px 15px 0 10px; background: #fff; color: #8c8c8c; }
.tabs { display: flex; align-items: flex-end; height: 36px; padding: 11px 0 0 11px; }
.tabs span { width: 58px; height: 22px; border: 1px solid #d6d6d6; }
.tabs .on { width: 80px; height: 25px; background: #fbfbfb; }
.tabs span:nth-child(n + 3) { width: 72px; }
.props footer { margin-top: auto; gap: 10px; padding: 0 9px 12px 0; }
.props .btn { width: 109px; height: 34px; padding-bottom: 2px; }

.wizard { top: 220px; width: 767px; margin-left: -383px; }
.wiz-top { display: flex; justify-content: flex-end; height: 44px; padding: 9px 14px 0 0; }
.wiz-head { display: flex; align-items: center; height: 26px; padding-left: 10px; }
.wiz-head .ico { margin: 0 6px 0 19px; }
.back svg { width: 16px; height: 14px; fill: none; stroke: #777; stroke-width: 2; }
.wiz-body { padding: 39px 24px 0 47px; height: 470px; }
.wiz-body h3 { font-size: 20px; line-height: 24px; color: #003399; }
.intro { display: flex; height: 168px; padding-top: 24px; }
.speaker { width: 34px; height: 38px; margin: 0 29px 0 3px; }
.intro p { white-space: nowrap; }
.intro q { quotes: "“" "”"; }
.lists { display: flex; gap: 7px; height: 160px; }
.box { border: 1px solid #828790; padding: 1px 2px 2px 1px; display: flex; background: #fff; }
.makers { width: 250px; }
.models { flex: 1; min-width: 0; flex-direction: column; }
.upper { display: flex; flex: 1; min-height: 0; }
.view { flex: 1; min-width: 0; overflow: hidden; }
.colhead { height: 30px; padding: 5px 0 0 8px; }
.view li { display: flex; align-items: center; height: 26px; width: max-content; }
.makers li { margin-left: 6px; padding: 0 7px 0 2px; }
.makers li[aria-selected="true"] { background: #efefef; }
.models li { padding-left: 5px; width: auto; }
.models li .label { flex: 1; height: 26px; line-height: 24px; padding-left: 3px; overflow: hidden; }
.models li[aria-selected="true"] .label { background: #efefef; }
.vbar { width: 20px; background: #f0f0f0; display: flex; flex-direction: column; align-items: center; padding: 6px 0 4px; }
.vbar b { width: 20px; height: 22px; background: #cdcdcd; }
.vbar svg, .hbar svg { width: 12px; height: 12px; fill: none; stroke: #606060; stroke-width: 3; }
.vbar svg:last-child { margin-top: auto; }
.makers .vbar b { margin-top: 53px; }
.models .vbar b { margin-top: 4px; }
.hbar { height: 20px; background: #f0f0f0; display: flex; align-items: center; padding: 0 25px 0 4px; }
.hbar b { width: 317px; height: 20px; margin-left: 5px; background: #cdcdcd; }
.hbar svg:last-child { margin-left: auto; }
.signed { display: flex; align-items: flex-start; padding-top: 10px; }
.signed .ico { margin-top: 11px; }
.signtext { height: 46px; margin-left: 14px; overflow: hidden; }
.signtext p { padding-top: 8px; }
.signtext a { display: block; margin-top: 12px; color: #0066cc; text-decoration: none; }
.signed .btn { width: 157px; height: 37px; margin-left: auto; }
.wizard footer { gap: 10px; height: 51px; padding: 11px 13px 0; border-top: 1px solid #dfdfdf; }
.wizard footer .btn { width: 84px; padding-bottom: 2px; }
.wizard footer .primary { width: 111px; border-color: #0078d7; }

.ime { position: absolute; right: 4px; bottom: 51px; display: flex; align-items: center; height: 29px; padding-left: 31px; background: #fafcfe; border: 1px solid #b9d0e2; }
.ime button { width: 27px; display: flex; justify-content: center; }
.ime .ico { width: 19px; height: 19px; }
.ime .imelogo { position: absolute; left: -7px; bottom: -2px; width: 36px; height: 36px; }

.taskbar { display: flex; height: 50px; background: #0a1216; color: #fff; }
.taskbar svg { width: 20px; height: 20px; }
.taskbar .w24 { width: 24px; }
.taskbar .w28 { width: 28px; height: 28px; }
.taskbar .w30 { width: 30px; height: 30px; }
.sys { width: 60px; display: flex; align-items: center; justify-content: center; }
.edge { width: 71px; padding-right: 4px; }
.chrome { width: 71px; margin-left: -10px; }
.task { width: 190px; margin-right: 11px; padding: 3px 0 0 9px; display: flex; align-items: center; border-bottom: 3px solid #76b9ed; white-space: nowrap; }
.task span { margin-left: 5px; }
.tray { display: flex; align-items: center; margin-left: auto; }
.tray svg { margin-right: 10px; fill: none; stroke: #fff; }
.zh { width: 20px; margin-right: 14px; font-size: 18px; }
.clock { display: flex; flex-direction: column; width: 148px; padding-top: 2px; text-align: center; line-height: 23px; margin-left: 2px; }
.notify { position: relative; width: 56px; padding-left: 12px; display: flex; align-items: center; }
.count { position: absolute; left: 20px; top: 24px; width: 20px; height: 20px; border: 1px solid #999; border-radius: 50%; background: #33393c; font-weight: 700; line-height: 18px; }
.peek { width: 6px; border-left: 1px solid #5d6265; }
</style>
